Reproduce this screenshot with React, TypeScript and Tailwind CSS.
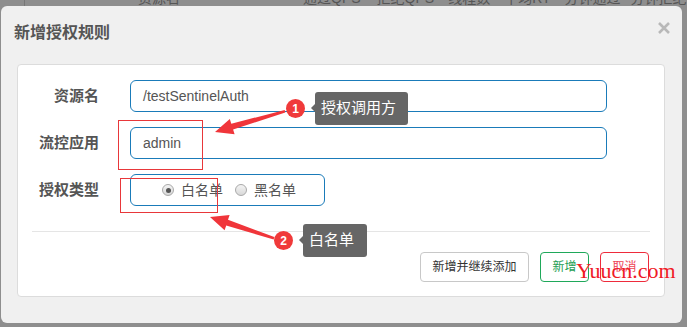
import React from 'react';

const font = { fontFamily: '"Liberation Sans", "Noto Sans CJK SC", sans-serif' };

function Radio({ checked, label }: { checked?: boolean; label: string }) {
  return (
    <label className="flex items-center gap-[7px] text-[14px] text-[#555]">
      <span className="w-[12px] h-[12px] rounded-full border border-[#a9a9a9] bg-gradient-to-b from-[#f4f4f4] to-[#d8d8d8] flex items-center justify-center">
        {checked && <span className="w-[5px] h-[5px] rounded-full bg-[#555]" />}
      </span>
      {label}
    </label>
  );
}

function Row({ label, children }: { label: string; children: React.ReactNode }) {
  return (
    <div className="flex items-center h-[32px]">
      <div className="w-[98px] pr-[31px] text-right text-[15px] font-bold text-[#555] whitespace-nowrap">{label}</div>
      {children}
    </div>
  );
}

function Tip({ n, text, className, width }: { n: number; text: string; className: string; width: string }) {
  return (
    <div className={`absolute flex items-center ${className}`}>
      <div className="w-[19px] h-[19px] rounded-full bg-[#f03a3a] text-white text-[12px] font-bold flex items-center justify-center">{n}</div>
      <div className={`relative ml-[10px] h-[33px] pl-[6px] rounded-[3px] bg-[#666] text-white text-[15px] flex items-center ${width}`}>
        <span className="absolute left-[-4px] top-[12px] w-0 h-0 border-y-[4px] border-y-transparent border-r-[4px] border-r-[#666]" />
        {text}
      </div>
    </div>
  );
}

export default function App() {
  return (
    <div className="relative w-[687px] h-[327px] bg-[#8e8e8e] overflow-hidden" style={font}>
      <div className="h-[6px] overflow-hidden relative">
        <div className="absolute left-[24px] top-0 h-[6px] w-px bg-[#777]" />
        <div className="flex text-[14px] text-[#555] -mt-[12px] leading-[20px] whitespace-nowrap">
          <span className="ml-[138px]">资源名</span>
          <span className="ml-[123px]">通过QPS</span>
          <span className="ml-[16px]">拒绝QPS</span>
          <span className="ml-[14px]">线程数</span>
          <span className="ml-[14px]">平均RT</span>
          <span className="ml-[14px]">分钟通过</span>
          <span className="ml-[10px]">分钟拒绝</span>
        </div>
      </div>

      <div className="ml-[1px] w-[681px] h-[317px] bg-[#f0f0f0] rounded-[6px] flex flex-col">
        <div className="flex items-start justify-between pl-[13px] pr-[12px] pt-[16px]">
          <h4 className="text-[16px] leading-[22px] font-bold text-[#555]">新增授权规则</h4>
          <svg width="12" height="12" viewBox="0 0 12 12" className="mt-[0px]">
            <path d="M1 1 L11 11 M11 1 L1 11" stroke="#b8b8b8" strokeWidth="2.6" />
          </svg>
        </div>

        <div className="mt-[20px] ml-[16px] w-[648px] h-[233px] bg-white border border-[#dcdcdc] rounded-[4px] pt-[15px] px-[14px] flex flex-col">
          <div className="flex flex-col gap-[15px]">
            <Row label="资源名">
              <div className="w-[477px] h-[32px] border border-[#1a7bb9] rounded-[6px] pl-[12px] flex items-center text-[14px] text-[#555]">/testSentinelAuth</div>
            </Row>
            <Row label="流控应用">
              <div className="w-[477px] h-[32px] border border-[#1a7bb9] rounded-[6px] pl-[12px] flex items-center text-[14px] text-[#555]">admin</div>
            </Row>
            <Row label="授权类型">
              <div className="w-[195px] h-[32px] border border-[#1a7bb9] rounded-[6px] pl-[31px] flex items-center gap-[12px]">
                <Radio checked label="白名单" />
                <Radio label="黑名单" />
              </div>
            </Row>
          </div>

          <div className="mt-[25px] border-t border-[#e5e5e5]" />

          <div className="mt-[20px] pr-[1px] flex justify-end gap-[11px]">
            <button className="w-[109px] h-[30px] border border-[#c8c8c8] rounded-[4px] bg-white text-[12px] text-[#333]">新增并继续添加</button>
            <button className="w-[49px] h-[30px] border border-[#1fa85a] rounded-[4px] bg-white text-[12px] text-[#1d9d52]">新增</button>
            <button className="w-[49px] h-[30px] border border-[#ee2b3b] rounded-[4px] bg-white text-[12px] text-[#ee4455]">取消</button>
          </div>
        </div>
      </div>

      {/* annotations */}
      <div className="absolute left-[118px] top-[120px] w-[85px] h-[50px] border border-[#e8373a]" />
      <div className="absolute left-[120px] top-[178px] w-[98px] h-[35px] border border-[#e8373a]" />

      <svg className="absolute left-0 top-0" width="687" height="327">
        <polygon points="215,132 229.8,119 231.3,123.7 284.7,110 285.3,112.5 233.1,129.5 234.6,134.2" fill="#f0353a" />
        <polygon points="210,217 229.6,215 228,219.7 274.3,237 273.7,239.5 226.2,225.5 224.6,230.2" fill="#f0353a" />
      </svg>

      <Tip n={1} text="授权调用方" width="w-[93px]" className="left-[286px] top-[92px]" />
      <Tip n={2} text="白名单" width="w-[64px]" className="left-[274px] top-[224px]" />

      <div className="absolute left-[576px] top-[257px] text-[22px] leading-[28px] text-[#f01a26]" style={{ fontFamily: '"Liberation Serif", serif' }}>
        Yuucn.com
      </div>
    </div>
  );
}
